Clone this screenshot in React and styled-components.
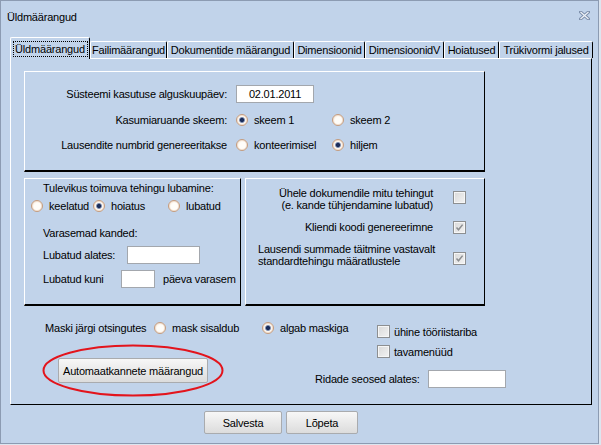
import React from 'react';
import styled, { createGlobalStyle } from 'styled-components';

const BG = '#c1d3ea';

const GlobalStyle = createGlobalStyle`
  html, body {
    margin: 0;
    padding: 0;
    background: #dde5ef;
  }
  body {
    font-family: 'Liberation Sans', Arial, sans-serif;
    font-size: 11px;
    letter-spacing: -0.2px;
    color: #000;
  }
`;

const Window = styled.div`
  width: 599px;
  height: 444px;
  box-sizing: border-box;
  background: ${BG};
  border: 1px solid #8c9bb2;
  display: flex;
  flex-direction: column;
`;

const TitleBar = styled.div`
  height: 36px;
  box-sizing: border-box;
  padding: 9px 8px 0 6px;
  display: flex;
  justify-content: space-between;
  align-items: flex-start;
  line-height: 14px;
`;

const CloseIcon = styled.svg`
  margin-top: 1px;
  display: block;
`;

const Body = styled.div`
  padding-left: 9px;
`;

const TabStrip = styled.div`
  height: 21px;
  display: flex;
  align-items: flex-end;
`;

const Tab = styled.div`
  box-sizing: border-box;
  width: ${p => p.$w}px;
  height: ${p => (p.$active ? 22 : 17)}px;
  margin-bottom: ${p => (p.$active ? -1 : 0)}px;
  position: relative;
  z-index: ${p => (p.$active ? 1 : 0)};
  background: ${BG};
  border-top: 1px solid #fff;
  border-left: 1px solid #fff;
  border-right: 1px solid #000;
  border-radius: 2px 2px 0 0;
  display: flex;
  align-items: center;
  justify-content: center;
  white-space: nowrap;
`;

const Focus = styled.span`
  width: 73px;
  height: 14px;
  box-sizing: border-box;
  outline: 1px dotted #000;
  display: flex;
  align-items: center;
  justify-content: center;
`;

const TabPage = styled.div`
  width: 582px;
  height: 347px;
  box-sizing: border-box;
  border-top: 1px solid #fff;
  border-left: 1px solid #fff;
  border-right: 1px solid #000;
  border-bottom: 1px solid #000;
  padding: 12px 0 0 13px;
`;

const GroupBox = styled.div`
  width: ${p => p.$w}px;
  height: ${p => p.$h}px;
  box-sizing: border-box;
  border-top: 1px solid #fff;
  border-left: 1px solid #fff;
  border-right: 1px solid #000;
  border-bottom: 2px solid #000;
`;

const GeneralBox = styled(GroupBox)`
  padding-top: 13px;
  display: grid;
  grid-template-columns: 202px 1fr;
  grid-auto-rows: min-content;
  column-gap: 9px;
  row-gap: 9px;
  align-items: center;
`;

const RowLabel = styled.div`
  text-align: right;
  white-space: nowrap;
  line-height: 16px;
`;

const Options = styled.div`
  display: flex;
  height: 16px;
  align-items: center;
`;

const Option = styled.label`
  display: flex;
  align-items: center;
  gap: 6px;
  width: ${p => (p.$w ? `${p.$w}px` : 'auto')};
  height: 14px;
  white-space: nowrap;
  flex: none;
`;

const RadioDot = styled.span`
  width: 12px;
  height: 12px;
  box-sizing: border-box;
  border-radius: 50%;
  border: 1px solid #c59c7e;
  flex: none;
  box-shadow: inset 0 0 0 1px #f4e2d2;
  background: ${p =>
    p.$on
      ? 'radial-gradient(circle, #1b2d5a 0 1.6px, #6f82aa 2.4px, #fcf8f2 3.4px)'
      : 'radial-gradient(circle at 60% 60%, #fffdf9 0 45%, #f2e3d2 100%)'};
`;

const Field = styled.div`
  box-sizing: border-box;
  width: ${p => p.$w}px;
  height: 18px;
  background: #fff;
  border: 1px solid #a3a7ad;
  display: flex;
  align-items: center;
  justify-content: center;
  flex: none;
`;

const Row = styled.div`
  display: flex;
  align-items: ${p => p.$align || 'center'};
`;

const PairRow = styled.div`
  display: flex;
  gap: 4px;
  margin-top: 6px;
`;

const FutureBox = styled(GroupBox)`
  padding-top: 2px;
  display: flex;
  flex-direction: column;
`;

const Caption = styled.div`
  margin: ${p => p.$top || 0}px 0 0 18px;
  line-height: 14px;
  white-space: nowrap;
`;

const RadioRow = styled.div`
  display: flex;
  margin: 4px 0 0 6px;
`;

const FieldRow = styled.div`
  display: flex;
  align-items: center;
  margin: 6px 0 0 18px;
  height: 18px;
`;

const FieldLabel = styled.span`
  width: ${p => p.$w}px;
  flex: none;
  white-space: nowrap;
`;

const Suffix = styled.span`
  margin-left: 8px;
  white-space: nowrap;
`;

const FlagBox = styled(GroupBox)`
  padding: 8px 0 0 12px;
  display: flex;
  flex-direction: column;
`;

const FlagRow = styled.div`
  display: flex;
  align-items: flex-start;
  gap: 20px;
  margin-top: ${p => p.$top || 0}px;
`;

const FlagLabel = styled.div`
  width: 175px;
  line-height: 12px;
  white-space: nowrap;
  text-align: ${p => p.$align || 'right'};
  direction: ltr;
  display: flex;
  flex-direction: column;
  align-items: ${p => (p.$align === 'left' ? 'flex-start' : 'flex-end')};
`;

const CheckBox = styled.span`
  width: 13px;
  height: 13px;
  box-sizing: border-box;
  border: 1px solid #8d8f91;
  background: linear-gradient(135deg, #d9d9d9, #f3f3f3);
  box-shadow: inset 0 0 0 1px #f6f6f6;
  display: flex;
  align-items: center;
  justify-content: center;
  flex: none;
  margin-top: ${p => p.$top || 0}px;
`;

const BottomGrid = styled.div`
  margin-top: 15px;
  display: grid;
  grid-template-columns: 353px auto;
`;

const MaskRow = styled.div`
  display: flex;
  align-items: center;
  height: 14px;
  padding-left: 21px;
`;

const MaskLabel = styled.span`
  width: 109px;
  flex: none;
  white-space: nowrap;
`;

const CheckColumn = styled.div`
  margin-top: 4px;
  display: flex;
  flex-direction: column;
  gap: 7px;
`;

const CheckRow = styled.label`
  display: flex;
  align-items: center;
  gap: 4px;
  height: 13px;
  white-space: nowrap;
`;

const ButtonRow = styled.div`
  grid-column: 1 / span 2;
  display: flex;
  align-items: flex-start;
`;

const ButtonWrap = styled.div`
  position: relative;
  margin-left: 34px;
`;

const Button = styled.button`
  box-sizing: border-box;
  width: ${p => p.$w}px;
  height: ${p => p.$h || 23}px;
  padding: 0;
  font: inherit;
  letter-spacing: inherit;
  color: #000;
  background: linear-gradient(#f7f7f7, #dcdcdc);
  border: 1px solid #a9abae;
  border-radius: 2px;
  flex: none;
`;

const Annotation = styled.svg`
  position: absolute;
  left: -16px;
  top: -14px;
  pointer-events: none;
`;

const LinkField = styled.div`
  display: flex;
  align-items: center;
  margin: 12px 0 0 107px;
`;

const Footer = styled.div`
  display: flex;
  gap: 4px;
  margin: 6px 0 0 194px;
`;

const Radio = ({ on, w, children }) => (
  <Option $w={w}>
    <RadioDot $on={on} />
    {children}
  </Option>
);

const Tick = ({ checked, top }) => (
  <CheckBox $top={top}>
    {checked && (
      <svg width="9" height="9" viewBox="0 0 9 9">
        <path d="M1.5 4.5 L3.5 6.8 L7.6 1.6" fill="none" stroke="#8b8d90" strokeWidth="1.5" />
      </svg>
    )}
  </CheckBox>
);

const tabs = [
  ['Üldmäärangud', 80],
  ['Failimäärangud', 77],
  ['Dokumentide määrangud', 127],
  ['Dimensioonid', 71],
  ['DimensioonidV', 79],
  ['Hoiatused', 55],
  ['Trükivormi jalused', 94],
];

export default function App() {
  return (
    <>
      <GlobalStyle />
      <Window>
        <TitleBar>
          <span>Üldmäärangud</span>
          <CloseIcon width="11" height="9" viewBox="0 0 11 9">
            <path d="M1.5 1 L9.5 8 M9.5 1 L1.5 8" stroke="#7d8fab" strokeWidth="3.2" strokeLinecap="square" />
            <path d="M1.5 1 L9.5 8 M9.5 1 L1.5 8" stroke="#eef2f8" strokeWidth="1.2" />
          </CloseIcon>
        </TitleBar>

        <Body>
          <TabStrip>
            {tabs.map(([name, w], i) => (
              <Tab key={name} $w={w} $active={i === 0}>
                {i === 0 ? <Focus>{name}</Focus> : name}
              </Tab>
            ))}
          </TabStrip>

          <TabPage>
            <GeneralBox $w={461} $h={101}>
              <RowLabel>Süsteemi kasutuse alguskuupäev:</RowLabel>
              <Field $w={78}>02.01.2011</Field>
              <RowLabel>Kasumiaruande skeem:</RowLabel>
              <Options>
                <Radio on w={96}>skeem 1</Radio>
                <Radio>skeem 2</Radio>
              </Options>
              <RowLabel>Lausendite numbrid genereeritakse</RowLabel>
              <Options>
                <Radio w={96}>konteerimisel</Radio>
                <Radio on>hiljem</Radio>
              </Options>
            </GeneralBox>

            <PairRow>
              <FutureBox $w={217} $h={128}>
                <Caption>Tulevikus toimuva tehingu lubamine:</Caption>
                <RadioRow>
                  <Radio w={62}>keelatud</Radio>
                  <Radio on w={75}>hoiatus</Radio>
                  <Radio>lubatud</Radio>
                </RadioRow>
                <Caption $top={13}>Varasemad kanded:</Caption>
                <FieldRow>
                  <FieldLabel $w={84}>Lubatud alates:</FieldLabel>
                  <Field $w={73} />
                </FieldRow>
                <FieldRow>
                  <FieldLabel $w={78}>Lubatud kuni</FieldLabel>
                  <Field $w={34} />
                  <Suffix>päeva varasem</Suffix>
                </FieldRow>
              </FutureBox>

              <FlagBox $w={240} $h={128}>
                <FlagRow>
                  <FlagLabel>
                    <span>Ühele dokumendile mitu tehingut</span>
                    <span>(e. kande tühjendamine lubatud)</span>
                  </FlagLabel>
                  <Tick top={4} />
                </FlagRow>
                <FlagRow $top={10}>
                  <FlagLabel>Kliendi koodi genereerimne</FlagLabel>
                  <Tick checked />
                </FlagRow>
                <FlagRow $top={9}>
                  <FlagLabel $align="left">
                    <span>Lausendi summade täitmine vastavalt</span>
                    <span>standardtehingu määratlustele</span>
                  </FlagLabel>
                  <Tick checked top={9} />
                </FlagRow>
              </FlagBox>
            </PairRow>

            <BottomGrid>
              <MaskRow>
                <MaskLabel>Maski järgi otsingutes</MaskLabel>
                <Radio w={108}>mask sisaldub</Radio>
                <Radio on>algab maskiga</Radio>
              </MaskRow>
              <CheckColumn>
                <CheckRow>
                  <Tick />
                  ühine tööriistariba
                </CheckRow>
                <CheckRow>
                  <Tick />
                  tavamenüüd
                </CheckRow>
              </CheckColumn>
              <ButtonRow>
                <ButtonWrap>
                  <Button $w={150} $h={25}>Automaatkannete määrangud</Button>
                  <Annotation width="182" height="53" viewBox="0 0 182 53">
                    <ellipse cx="91" cy="26.5" rx="89.5" ry="25" fill="none" stroke="#e3141c" strokeWidth="2" />
                  </Annotation>
                </ButtonWrap>
                <LinkField>
                  <FieldLabel $w={113}>Ridade seosed alates:</FieldLabel>
                  <Field $w={78} />
                </LinkField>
              </ButtonRow>
            </BottomGrid>
          </TabPage>

          <Footer>
            <Button $w={78}>Salvesta</Button>
            <Button $w={72}>Lõpeta</Button>
          </Footer>
        </Body>
      </Window>
    </>
  );
}
